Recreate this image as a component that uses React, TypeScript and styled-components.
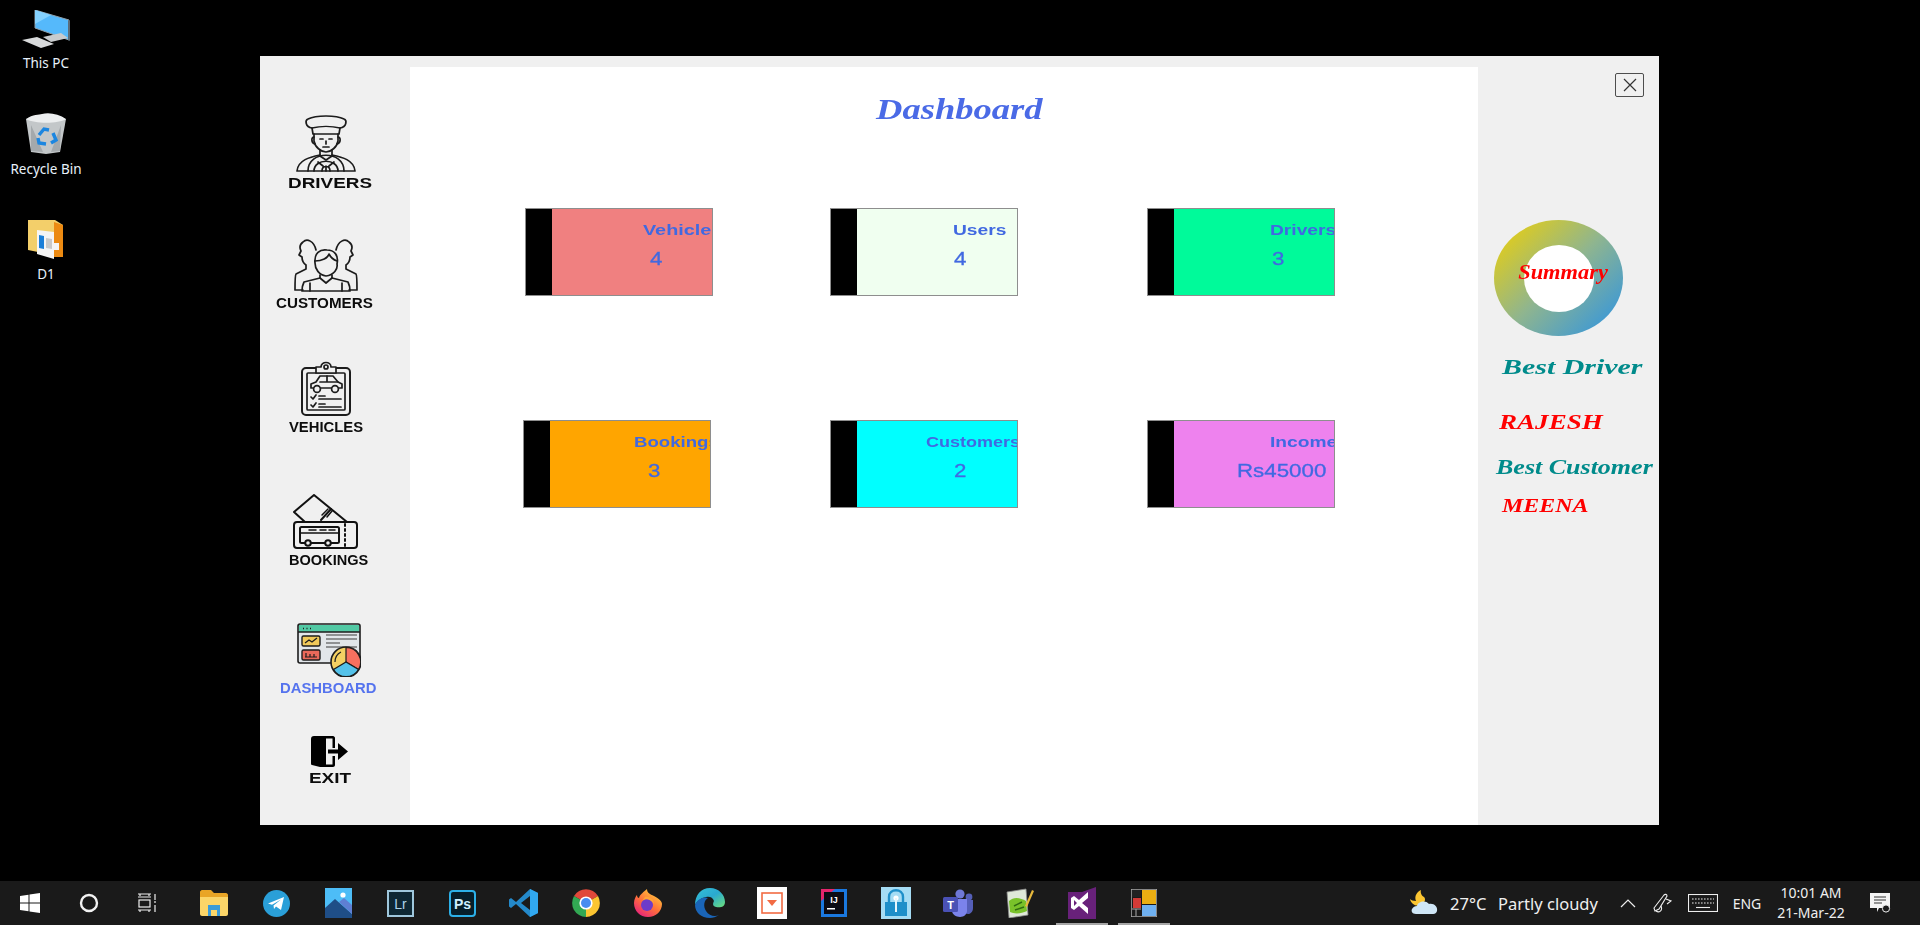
import React from "react";
import styled, { createGlobalStyle } from "styled-components";

const GlobalStyle = createGlobalStyle`
  html, body { margin: 0; padding: 0; background: #000; }
  body { width: 1920px; height: 925px; overflow: hidden; font-family: "Liberation Sans", Arial, sans-serif; }
`;

const Screen = styled.div`
  width: 1920px;
  height: 925px;
  display: flex;
  flex-direction: column;
  background: #000;
`;

const Desktop = styled.div`
  display: flex;
  height: 881px;
`;

const ShortcutColumn = styled.div`
  width: 92px;
  flex: none;
  display: flex;
  flex-direction: column;
  align-items: center;
`;

const Shortcut = styled.div<{ $top: number }>`
  margin-top: ${(p) => p.$top}px;
  display: flex;
  flex-direction: column;
  align-items: center;
  color: #e8f2fb;
  font-family: "Noto Sans", sans-serif;
  font-size: 13.5px;
  line-height: 18px;
  gap: 6px;
  svg { display: block; }
`;

const AppWindow = styled.div`
  margin: 56px 0 0 168px;
  width: 1399px;
  height: 769px;
  display: flex;
  background: #f0f0f0;
  filter: blur(0.3px);
`;

const Sidebar = styled.nav`
  width: 150px;
  flex: none;
  display: flex;
  flex-direction: column;
  padding-top: 59px;
  box-sizing: border-box;
`;

const NavItem = styled.div<{ $top: number }>`
  margin-top: ${(p) => p.$top}px;
  display: flex;
  flex-direction: column;
  align-items: flex-start;
`;

const NavIcon = styled.div<{ $left: number }>`
  margin-left: ${(p) => p.$left}px;
  svg { display: block; }
`;

const NavLabel = styled.span<{ $left: number; $size: number; $sx: number; $active?: boolean }>`
  margin: 3px 0 0 ${(p) => p.$left}px;
  height: 16px;
  line-height: 16px;
  font-size: ${(p) => p.$size}px;
  font-weight: 700;
  white-space: nowrap;
  color: ${(p) => (p.$active ? "#5573ee" : "#0c0c0c")};
  transform: scaleX(${(p) => p.$sx});
  transform-origin: left center;
`;

const Main = styled.main`
  width: 1068px;
  flex: none;
  margin-top: 11px;
  background: #fff;
`;

const Title = styled.h1`
  margin: 0;
  padding: 25px 0 0 466px;
  line-height: 34px;
  height: 34px;
  font-family: "Liberation Serif", serif;
  font-style: italic;
  font-weight: 700;
  font-size: 29px;
  color: #4a6ae6;
  white-space: nowrap;
  transform: scaleX(1.26);
  transform-origin: 466px center;
`;

const Grid = styled.div`
  margin-top: 82px;
  display: flex;
  flex-direction: column;
  gap: 124px;
`;

const CardRow = styled.div`
  display: flex;
`;

const Card = styled.div<{ $left: number; $bg: string }>`
  margin-left: ${(p) => p.$left}px;
  width: 188px;
  height: 88px;
  box-sizing: border-box;
  flex: none;
  display: flex;
  border: 1px solid #8e8e8e;
  background: ${(p) => p.$bg};
  overflow: hidden;
`;

const CardBar = styled.div`
  width: 26px;
  flex: none;
  background: #000;
`;

const CardBody = styled.div`
  flex: 1;
  min-width: 0;
  display: flex;
  flex-direction: column;
  align-items: flex-start;
  padding-top: 12px;
  color: #4169e1;
  font-weight: 700;
  white-space: nowrap;
`;

const CardLabel = styled.div<{ $left: number; $sx: number }>`
  margin-left: ${(p) => p.$left}px;
  font-size: 15px;
  line-height: 18px;
  transform: scaleX(${(p) => p.$sx});
  transform-origin: left center;
`;

const CardValue = styled.div<{ $left: number }>`
  margin: 9px 0 0 ${(p) => p.$left}px;
  font-size: 18px;
  line-height: 22px;
  font-weight: 400;
  transform: scaleX(1.24);
  transform-origin: left center;
  -webkit-text-stroke: 0.3px #4169e1;
`;

const Summary = styled.aside`
  flex: 1;
  display: flex;
  flex-direction: column;
  align-items: flex-start;
`;

const CloseButton = styled.button`
  align-self: flex-end;
  margin: 17px 15px 0 0;
  width: 29px;
  height: 24px;
  padding: 0;
  display: flex;
  align-items: center;
  justify-content: center;
  background: transparent;
  border: 1.5px solid #4d4d4d;
  border-radius: 2px;
`;

const Donut = styled.div`
  margin: 123px 0 0 16px;
  width: 129px;
  height: 116px;
  border-radius: 50%;
  display: flex;
  align-items: center;
  justify-content: center;
  background: linear-gradient(135deg, #dccb22 12%, #8fb58f 50%, #419ad2 88%);
`;

const DonutHole = styled.div`
  width: 70px;
  height: 67px;
  border-radius: 50%;
  background: #fff;
  display: flex;
  align-items: center;
  justify-content: center;
`;

const ScriptText = styled.div<{ $size: number; $sx: number; $color: string; $top: number; $left: number }>`
  margin: ${(p) => p.$top}px 0 0 ${(p) => p.$left}px;
  height: 24px;
  line-height: 24px;
  font-family: "Liberation Serif", serif;
  font-style: italic;
  font-weight: 700;
  font-size: ${(p) => p.$size}px;
  color: ${(p) => p.$color};
  white-space: nowrap;
  transform: scaleX(${(p) => p.$sx});
  transform-origin: left center;
`;

const DonutText = styled.span`
  margin: 0 0 12px 9px;
  flex: none;
  font-family: "Liberation Serif", serif;
  font-style: italic;
  font-weight: 700;
  font-size: 20px;
  color: #ff0000;
  transform: scaleX(1.12);
  white-space: nowrap;
`;

const Taskbar = styled.footer`
  height: 44px;
  display: flex;
  align-items: stretch;
  background: #1a1a1a;
`;

const SystemButton = styled.div`
  width: 59px;
  flex: none;
  display: flex;
  align-items: center;
  justify-content: center;
`;

const TaskList = styled.div`
  display: flex;
  margin-left: 6px;
`;

const TaskItem = styled.div<{ $open?: boolean }>`
  width: 52px;
  margin: 0 5px;
  flex: none;
  box-sizing: border-box;
  display: flex;
  align-items: center;
  justify-content: center;
  border-top: 2px solid transparent;
  border-bottom: 2px solid ${(p) => (p.$open ? "#a6a6a6" : "transparent")};
`;

const Tray = styled.div`
  margin-left: auto;
  display: grid;
  grid-template-columns: 40px 48px 114px 32px 38px 42px 46px 82px 56px;
  width: 510px;
  color: #efefef;
  font-family: "Noto Sans", sans-serif;
`;

const TraySlot = styled.div<{ $start?: boolean; $size?: number }>`
  display: flex;
  align-items: center;
  justify-content: ${(p) => (p.$start ? "flex-start" : "center")};
  font-size: ${(p) => p.$size ?? 16.5}px;
  white-space: nowrap;
`;

const Clock = styled.div`
  text-align: center;
  font-size: 14px;
  line-height: 20px;
`;

const stroke = { fill: "none", stroke: "#1c1c1c", strokeWidth: 1.7, strokeLinecap: "round", strokeLinejoin: "round" } as const;

const DriverIcon = () => (
  <svg width="60" height="57" viewBox="0 0 60 57">
    <g {...stroke}>
      <path d="M16 13C9 12 9 5 12 4C20 0 40 0 48 4C51 5 51 12 44 13C36 11 24 11 16 13Z" />
      <path d="M16 13L17 19L43 19L44 13" />
      <path d="M18 19V26C19 32 25 37 30 37C35 37 41 32 42 26V19" />
      <path d="M18 22C15 22 15 28 19 29M42 22C45 22 45 28 41 29" />
      <path d="M24 24H27M33 24H36M30 26V29M27 32H33" />
      <path d="M24 35V41L30 45L36 41V35" />
      <path d="M24 40C14 42 2 45 1 56H59C58 45 46 42 36 40" />
      <path d="M12 56C12 35 48 35 48 56" />
      <path d="M18 56C18 43 42 43 42 56" />
      <path d="M22 47L27 51M38 47L33 51M30 51V56M26 56C26 50 34 50 34 56" />
    </g>
  </svg>
);

const CustomersIcon = () => (
  <svg width="64" height="54" viewBox="0 0 64 54">
    <g {...stroke}>
      <path d="M22 12C20 3 13 0 9 4C5 7 6 11 7 13L5 17L8 19C8 23 9 25 12 27V31L2 36C1 37 1 40 1 52H9" />
      <path d="M42 12C44 3 51 0 55 4C59 7 58 11 57 13L59 17L56 19C56 23 55 25 52 27V31L62 36C63 37 63 40 63 52H55" />
      <path d="M21 25C20 15 26 11 33 12C40 12 45 17 43 26C44 31 40 37 32 38C25 37 21 31 21 25Z" />
      <path d="M21 23C28 23 34 20 35 16C37 20 40 22 43 23" />
      <path d="M26 37V40L10 44C9 46 8 48 8 53H56C56 48 55 46 54 44L38 40V37" />
      <path d="M26 40L32 45L38 40M16 45V53M48 45V53" />
    </g>
  </svg>
);

const VehiclesIcon = () => (
  <svg width="50" height="55" viewBox="0 0 50 55">
    <g {...stroke}>
      <rect x="1" y="7" width="48" height="47" rx="4" strokeWidth="2" />
      <rect x="6" y="12" width="38" height="37" rx="1" />
      <path d="M15 12V6H20C20 0 30 0 30 6H35V12Z" fill="#f0f0f0" />
      <circle cx="25" cy="6" r="2" />
      <path d="M10 27V23L15 21L19 15H32L37 21L41 23V27Z" />
      <circle cx="16" cy="28" r="3.4" fill="#f0f0f0" />
      <circle cx="34" cy="28" r="3.4" fill="#f0f0f0" />
      <path d="M19 21H37M26 15V21" />
      <path d="M10 36L12 38L15 34M10 44L12 46L15 42M18 35H24M18 38H40M18 43H24M18 46H40" />
    </g>
  </svg>
);

const BookingsIcon = () => (
  <svg width="65" height="55" viewBox="0 0 65 55">
    <g fill="none" stroke="#111" strokeWidth="2" strokeLinejoin="round" strokeLinecap="round">
      <path d="M12 28L1 18L21 1L54 28" />
      <path d="M28 26L38 15" />
      <path d="M28 22L34 16M33 24L38 18" strokeWidth="1.5" transform="translate(1 -1)" />
      <rect x="1" y="28" width="63" height="26" rx="3" />
      <rect x="7" y="33" width="39" height="16" rx="1.5" />
      <path d="M7 39H46M16 36H23M27 36H33M36 36H42" strokeWidth="1.5" />
      <circle cx="15" cy="49" r="2.8" fill="#f0f0f0" />
      <circle cx="35" cy="49" r="2.8" fill="#f0f0f0" />
      <path d="M52 30V53" strokeDasharray="2 3" />
    </g>
  </svg>
);

const DashboardIcon = () => (
  <svg width="64" height="54" viewBox="0 0 64 54">
    <rect x="1" y="1" width="62" height="39" rx="2" fill="#e2e6ea" stroke="#1d1d1d" strokeWidth="1.6" />
    <rect x="2" y="2" width="60" height="7" fill="#52c9a4" />
    <path d="M1 9H63" stroke="#1d1d1d" strokeWidth="1.4" />
    <path d="M6 5.5H7M9.5 5.5H10.5M13 5.5H14" stroke="#1d1d1d" strokeWidth="1.4" />
    <rect x="5" y="13" width="18" height="10" rx="1.5" fill="#f0c95a" stroke="#1d1d1d" strokeWidth="1.4" />
    <path d="M8 20L12 17L15 19L20 15" fill="none" stroke="#1d1d1d" strokeWidth="1.3" />
    <rect x="5" y="27" width="18" height="10" rx="1.5" fill="#e8695a" stroke="#1d1d1d" strokeWidth="1.4" />
    <path d="M8 34H20M9 34V30M13 34V31M17 34V31" fill="none" stroke="#1d1d1d" strokeWidth="1.2" />
    <path d="M29 12H60M29 16H60M29 20H43M29 24H60M47 28H60" stroke="#3c3c3c" strokeWidth="1.2" />
    <circle cx="49" cy="39" r="15" fill="#f4d163" stroke="#1d1d1d" strokeWidth="1.6" />
    <path d="M49 39V24.5A14.5 14.5 0 0 1 61.5 46.5Z" fill="#f7705f" stroke="#1d1d1d" strokeWidth="1.2" />
    <path d="M49 39L61.5 46.5A14.5 14.5 0 0 1 36.5 46.5Z" fill="#54c2ea" stroke="#1d1d1d" strokeWidth="1.2" />
    <path d="M38 39C38 34 40 31 44 29" fill="none" stroke="#1d1d1d" strokeWidth="1.2" />
  </svg>
);

const ExitIcon = () => (
  <svg width="37" height="31" viewBox="0 0 37 31">
    <path d="M3 0H22C23 0 24 1 24 2V12H21.5V2.5H15V28.5H21.5V20H24V29C24 30 23 31 22 31H9L1 29C0 29 0 28 0 27V3C0 1 1 0 3 0Z" fill="#000" />
    <path d="M17 13.5H27V7L37 15.5L27 24V17.5H17Z" fill="#000" />
  </svg>
);

const ThisPcIcon = () => (
  <svg width="50" height="38" viewBox="0 0 50 38">
    <path d="M14 0L48 10V30L14 18Z" fill="#55b9fb" stroke="#90a0ab" strokeWidth="1" />
    <path d="M14 0L30 5L14 14Z" fill="#84d2ff" />
    <path d="M47 10L49 11V31L47 30Z" fill="#5b6c78" />
    <path d="M22 27L40 23L47 28L30 32Z" fill="#c8cbcd" />
    <path d="M1 30L16 27L33 34L20 38Z" fill="#d8dadb" />
  </svg>
);

const RecycleIcon = () => (
  <svg width="42" height="41" viewBox="0 0 42 41">
    <path d="M1 6L41 6L35 39L21 41L6 39Z" fill="#c3c7c9" />
    <path d="M1 6C8 1 14 2 17 1C24 -1 34 1 41 6C33 11 10 11 1 6Z" fill="#eceeef" />
    <path d="M6 12L18 39L6 38ZM36 12L26 39L35 38Z" fill="#a4a9ac" />
    <path d="M14 22L19 16L24 17M28 20L31 27L26 30M21 31L14 30L13 25" fill="none" stroke="#1c86e0" strokeWidth="3.4" />
  </svg>
);

const FolderIcon = () => (
  <svg width="36" height="39" viewBox="0 0 36 39">
    <path d="M0 0H27L35 5V37L0 30Z" fill="#f3cf6a" />
    <path d="M26 2L35 5V37H26Z" fill="#ec8a12" />
    <path d="M9 10L26 12V39L9 34Z" fill="#f5f5f5" />
    <path d="M11 15L16 16V29L11 28Z" fill="#1b7fd8" />
    <path d="M18 18L24 19V29L18 28Z" fill="#c9c9c9" />
    <path d="M26 23H31V30H26Z" fill="#f5f5f5" />
  </svg>
);

const WinLogo = () => (
  <svg width="20" height="20" viewBox="0 0 20 20" fill="#fff">
    <path d="M0 3L8.5 1.8V9.5H0ZM9.5 1.6L20 0V9.5H9.5ZM0 10.5H8.5V18.2L0 17ZM9.5 10.5H20V20L9.5 18.4Z" />
  </svg>
);

const CortanaCircle = () => (
  <svg width="20" height="20" viewBox="0 0 20 20">
    <circle cx="10" cy="10" r="8" fill="none" stroke="#f2f2f2" strokeWidth="2.4" />
  </svg>
);

const TaskViewIcon = () => (
  <svg width="20" height="20" viewBox="0 0 20 20" fill="none" stroke="#eee" strokeWidth="1.2">
    <path d="M0 1H13M2 1V3M11 1V3M0 4H13" />
    <rect x="1" y="7" width="11" height="7" />
    <path d="M0 17H13M2 17V19M11 17V19M17 1V7M17 8V10M17 12V19" />
  </svg>
);

const ExplorerIcon = () => (
  <svg width="28" height="26" viewBox="0 0 28 26">
    <path d="M0 2C0 1 1 0 2 0H11L14 3H26C27 3 28 4 28 5V8H0Z" fill="#e9a526" />
    <path d="M0 7H28V24C28 25 27 26 26 26H2C1 26 0 25 0 24Z" fill="#fbd568" />
    <path d="M8 15H20V26H17V20H11V26H8Z" fill="#3a9bd8" />
  </svg>
);

const TelegramIcon = () => (
  <svg width="27" height="27" viewBox="0 0 27 27">
    <circle cx="13.5" cy="13.5" r="13.5" fill="#2a9fd8" />
    <path d="M5 13.5L21 7L18 20L13 16.5L11 19L10.5 15.5L18 9.5L9 14.8Z" fill="#fff" />
  </svg>
);

const PhotosIcon = () => (
  <svg width="27" height="30" viewBox="0 0 27 30">
    <rect width="27" height="30" fill="#4dbdf7" />
    <circle cx="18" cy="7" r="2.6" fill="#fff" />
    <path d="M0 20L10 11L27 26V30H0Z" fill="#1f4e87" />
    <path d="M14 14L19 10L27 17V26Z" fill="#5f7fd3" />
  </svg>
);

const BadgeIcon = styled.svg`
  font-family: "Liberation Sans", sans-serif;
`;

const LrIcon = () => (
  <BadgeIcon width="27" height="27" viewBox="0 0 27 27">
    <rect x="1" y="1" width="25" height="25" fill="#0e2733" stroke="#9fc7dc" strokeWidth="2" />
    <text x="13.5" y="19" textAnchor="middle" fontSize="14" fill="#add5ec">Lr</text>
  </BadgeIcon>
);

const PsIcon = () => (
  <BadgeIcon width="27" height="27" viewBox="0 0 27 27">
    <rect x="1" y="1" width="25" height="25" rx="3" fill="#061e2a" stroke="#2cb0e8" strokeWidth="2" />
    <text x="13.5" y="19" textAnchor="middle" fontSize="14" fontWeight="700" fill="#cfefff">Ps</text>
  </BadgeIcon>
);

const VsCodeIcon = () => (
  <svg width="30" height="30" viewBox="0 0 30 30">
    <path d="M21 1L29 5V25L21 29L7 16L2 20L0 18.5V11.5L2 10L7 14Z" fill="#2489ca" />
    <path d="M21 8L12 15L21 22Z" fill="#1a1a1a" />
    <path d="M21 1L29 5V25L21 29Z" fill="#31a8f0" />
  </svg>
);

const ChromeIcon = () => (
  <svg width="28" height="28" viewBox="0 0 28 28">
    <path d="M14 14L2 7A14 14 0 0 1 26 7Z" fill="#e0483a" />
    <path d="M14 14L2 7A14 14 0 0 0 14 28Z" fill="#32a853" />
    <path d="M14 14L26 7A14 14 0 0 1 14 28Z" fill="#fbc531" />
    <circle cx="14" cy="14" r="6.6" fill="#fff" />
    <circle cx="14" cy="14" r="5" fill="#4a8cf0" />
  </svg>
);

const FirefoxIcon = () => (
  <svg width="28" height="28" viewBox="0 0 28 28">
    <defs>
      <linearGradient id="ffGrad" x1="0.8" y1="0" x2="0.1" y2="1">
        <stop offset="0" stopColor="#ffd43b" />
        <stop offset="0.5" stopColor="#ff7139" />
        <stop offset="1" stopColor="#e31587" />
      </linearGradient>
    </defs>
    <path d="M14 28C6 28 0 22 0 14C0 10 2 7 3 6C3 8 4 9 5 9C6 5 10 3 13 0C13 4 16 5 20 7C25 10 28 12 28 15C28 22 22 28 14 28Z" fill="url(#ffGrad)" />
    <circle cx="13" cy="16" r="6" fill="#6c3bc9" />
    <path d="M8 12C11 9 17 10 20 15C20 10 15 7 11 8Z" fill="#ffa436" />
  </svg>
);

const EdgeIcon = () => (
  <svg width="30" height="30" viewBox="0 0 30 30">
    <defs>
      <linearGradient id="edgeGrad" x1="0" y1="0" x2="1" y2="1">
        <stop offset="0" stopColor="#35c1d8" />
        <stop offset="0.5" stopColor="#2aa9d0" />
        <stop offset="1" stopColor="#6ee07a" />
      </linearGradient>
    </defs>
    <path d="M15 0C24 0 30 7 30 14C30 19 25 20 21 19C17 18 18 15 19 13C18 9 14 8 11 9C6 10 2 13 0 17C0 7 6 0 15 0Z" fill="url(#edgeGrad)" />
    <path d="M0 17C2 11 9 8 13 10C9 12 8 18 11 23C14 28 20 29 24 27C21 29 18 30 15 30C6 30 0 24 0 17Z" fill="#1a65b8" />
  </svg>
);

const ScreenIcon = () => (
  <svg width="30" height="32" viewBox="0 0 30 32">
    <rect width="30" height="32" fill="#fff" />
    <rect x="5" y="6" width="20" height="20" fill="none" stroke="#f26b43" strokeWidth="1.6" />
    <path d="M10 13H20L15 19Z" fill="#f26b43" />
  </svg>
);

const IntellijIcon = () => (
  <BadgeIcon width="26" height="28" viewBox="0 0 26 28">
    <rect width="26" height="28" fill="#1a78e0" />
    <path d="M0 0H14L0 12Z" fill="#e5256c" />
    <rect x="3" y="3" width="20" height="22" fill="#0b0b14" />
    <text x="13" y="14" textAnchor="middle" fontSize="9" fontWeight="700" fill="#fff">IJ</text>
    <rect x="6" y="19" width="8" height="1.5" fill="#fff" />
  </BadgeIcon>
);

const LockIcon = () => (
  <svg width="30" height="32" viewBox="0 0 30 32">
    <rect width="30" height="32" fill="#a5dcf4" />
    <path d="M8 15V10C8 1 22 1 22 10V15" fill="none" stroke="#1f8fc9" strokeWidth="2.4" />
    <rect x="4" y="15" width="22" height="14" fill="#1f8fc9" />
    <circle cx="15" cy="11" r="2.6" fill="#fff" />
    <rect x="14" y="11" width="2" height="14" fill="#e8f6fc" />
  </svg>
);

const TeamsIcon = () => (
  <BadgeIcon width="30" height="28" viewBox="0 0 30 28">
    <circle cx="17" cy="5" r="4.6" fill="#6f78d6" />
    <circle cx="26" cy="8" r="3.4" fill="#555fb8" />
    <path d="M20 11H30V19C30 23 27 25 25 25L20 24Z" fill="#555fb8" />
    <path d="M9 10H24V22C24 25 21 28 17 28C13 28 9 25 9 22Z" fill="#7b83eb" />
    <rect y="8" width="15" height="15" rx="1.5" fill="#4a51b5" />
    <text x="7.5" y="20" textAnchor="middle" fontSize="11" fontWeight="700" fill="#fff">T</text>
  </BadgeIcon>
);

const NotepadIcon = () => (
  <svg width="28" height="30" viewBox="0 0 28 30">
    <path d="M1 4L20 1L22 27L3 30Z" fill="#dfe8d8" stroke="#8a8a8a" strokeWidth="0.8" />
    <path d="M3 13C8 8 15 10 20 13L21 23C15 26 8 26 4 24Z" fill="#79c22a" />
    <path d="M8 18L16 14M9 22L18 19" stroke="#2f6b12" strokeWidth="1.5" />
    <path d="M19 18L26 2L28 3L21 19Z" fill="#e8b93c" />
  </svg>
);

const VisualStudioIcon = () => (
  <svg width="28" height="32" viewBox="0 0 28 32">
    <path d="M0 5H14L28 0V32H0Z" fill="#68217a" />
    <path d="M20 5V27L11 19L6 23L3 21V11L6 9L11 13ZM20 11L14 16L20 21ZM6 13V19L9 16Z" fill="#fff" fillRule="evenodd" />
  </svg>
);

const PaletteIcon = () => (
  <svg width="26" height="28" viewBox="0 0 26 28">
    <rect width="26" height="28" fill="#1a1a1a" stroke="#aaa" strokeWidth="1.5" />
    <rect x="1" y="1" width="9" height="7" fill="#222" />
    <rect x="11" y="1" width="14" height="14" fill="#ebae12" />
    <rect x="2" y="9" width="8" height="10" fill="#d33a36" />
    <rect x="11" y="16" width="14" height="11" fill="#6fb0f0" />
    <path d="M1 20H10M5 20V27" stroke="#aaa" />
  </svg>
);

const WeatherIcon = () => (
  <svg width="28" height="26" viewBox="0 0 28 26">
    <path d="M11 0C7 2 4 6 6 11C3 11 1 10 0 9C1 14 6 17 11 15C15 13 16 9 14 7C12 6 10 3 11 0Z" fill="#fbc531" />
    <path d="M6 24C2 24 1 21 2 19C3 17 5 16 7 16C8 11 16 10 19 14C24 13 28 17 27 21C26 24 24 24 22 24Z" fill="#cfe6f6" />
  </svg>
);

const CaretIcon = () => (
  <svg width="16" height="9" viewBox="0 0 16 9" fill="none" stroke="#eee" strokeWidth="1.2">
    <path d="M1 8L8 1L15 8" />
  </svg>
);

const PenIcon = () => (
  <svg width="20" height="20" viewBox="0 0 20 20" fill="none" stroke="#eee" strokeWidth="1.1">
    <path d="M2 18L1 15L11 2C12 1 14 1 14 3L6 16Z" />
    <path d="M13 6L18 8L14 11M8 13C10 18 6 20 3 18" />
  </svg>
);

const KeyboardIcon = () => (
  <svg width="30" height="18" viewBox="0 0 30 18" fill="none" stroke="#eee" strokeWidth="1.1">
    <rect x="0.5" y="0.5" width="29" height="17" />
    <path d="M4 5H26M4 9H26" strokeDasharray="1.6 1.4" />
    <path d="M8 13.5H22" />
  </svg>
);

const NotificationIcon = () => (
  <svg width="21" height="20" viewBox="0 0 21 20">
    <path d="M0 0H20V15H9L7 19V15H0Z" fill="#f4f4f4" />
    <path d="M4 4H16M4 7H16M4 10H12" stroke="#333" strokeWidth="1.1" />
    <circle cx="16" cy="15.5" r="3.6" fill="#1a1a1a" stroke="#eee" strokeWidth="1" />
  </svg>
);

const navItems = [
  { top: 0, iconLeft: 36, labelLeft: 28, size: 15, sx: 1.26, label: "DRIVERS", Icon: DriverIcon },
  { top: 47, iconLeft: 34, labelLeft: 16, size: 14, sx: 1.085, label: "CUSTOMERS", Icon: CustomersIcon },
  { top: 50, iconLeft: 41, labelLeft: 29, size: 14, sx: 1.057, label: "VEHICLES", Icon: VehiclesIcon },
  { top: 59, iconLeft: 33, labelLeft: 29, size: 15, sx: 0.97, label: "BOOKINGS", Icon: BookingsIcon },
  { top: 55, iconLeft: 37, labelLeft: 20, size: 14, sx: 1.06, label: "DASHBOARD", Icon: DashboardIcon, active: true },
  { top: 40, iconLeft: 51, labelLeft: 49, size: 15, sx: 1.26, label: "EXIT", Icon: ExitIcon },
];

const cardRows = [
  [
    { left: 115, bg: "#f08080", label: "Vehicles", labelLeft: 91, sx: 1.32, value: "4", valueLeft: 98 },
    { left: 117, bg: "#f0fff0", label: "Users", labelLeft: 96, sx: 1.28, value: "4", valueLeft: 97 },
    { left: 129, bg: "#00fa9a", label: "Drivers", labelLeft: 96, sx: 1.28, value: "3", valueLeft: 98 },
  ],
  [
    { left: 113, bg: "#ffa500", label: "Bookings", labelLeft: 84, sx: 1.24, value: "3", valueLeft: 98 },
    { left: 119, bg: "#00ffff", label: "Customers", labelLeft: 69, sx: 1.2, value: "2", valueLeft: 97 },
    { left: 129, bg: "#ee82ee", label: "Income", labelLeft: 96, sx: 1.28, value: "Rs45000", valueLeft: 63 },
  ],
];

const apps = [
  { Icon: ExplorerIcon }, { Icon: TelegramIcon }, { Icon: PhotosIcon }, { Icon: LrIcon }, { Icon: PsIcon },
  { Icon: VsCodeIcon }, { Icon: ChromeIcon }, { Icon: FirefoxIcon }, { Icon: EdgeIcon }, { Icon: ScreenIcon },
  { Icon: IntellijIcon }, { Icon: LockIcon }, { Icon: TeamsIcon }, { Icon: NotepadIcon },
  { Icon: VisualStudioIcon, open: true }, { Icon: PaletteIcon, open: true },
];

const App = () => {
  return (
    <Screen>
      <GlobalStyle />
      <Desktop>
        <ShortcutColumn>
          <Shortcut $top={10}><ThisPcIcon />This PC</Shortcut>
          <Shortcut $top={41}><RecycleIcon />Recycle Bin</Shortcut>
          <Shortcut $top={42}><FolderIcon />D1</Shortcut>
        </ShortcutColumn>
        <AppWindow>
          <Sidebar>
            {navItems.map(({ top, iconLeft, labelLeft, size, sx, label, Icon, active }) => (
              <NavItem key={label} $top={top}>
                <NavIcon $left={iconLeft}><Icon /></NavIcon>
                <NavLabel $left={labelLeft} $size={size} $sx={sx} $active={active}>{label}</NavLabel>
              </NavItem>
            ))}
          </Sidebar>
          <Main>
            <Title>Dashboard</Title>
            <Grid>
              {cardRows.map((row, i) => (
                <CardRow key={i}>
                  {row.map((c) => (
                    <Card key={c.label} $left={c.left} $bg={c.bg}>
                      <CardBar />
                      <CardBody>
                        <CardLabel $left={c.labelLeft} $sx={c.sx}>{c.label}</CardLabel>
                        <CardValue $left={c.valueLeft}>{c.value}</CardValue>
                      </CardBody>
                    </Card>
                  ))}
                </CardRow>
              ))}
            </Grid>
          </Main>
          <Summary>
            <CloseButton aria-label="Close">
              <svg width="14" height="14" viewBox="0 0 14 14" stroke="#333" strokeWidth="1.2">
                <path d="M1 1L13 13M13 1L1 13" />
              </svg>
            </CloseButton>
            <Donut>
              <DonutHole>
                <DonutText>Summary</DonutText>
              </DonutHole>
            </Donut>
            <ScriptText $top={19} $left={24} $size={22} $sx={1.36} $color="#008b8b">Best Driver</ScriptText>
            <ScriptText $top={31} $left={21} $size={22} $sx={1.23} $color="#ff0000">RAJESH</ScriptText>
            <ScriptText $top={21} $left={18} $size={20} $sx={1.3} $color="#008b8b">Best Customer</ScriptText>
            <ScriptText $top={15} $left={24} $size={19} $sx={1.26} $color="#ff0000">MEENA</ScriptText>
          </Summary>
        </AppWindow>
      </Desktop>
      <Taskbar>
        <SystemButton><WinLogo /></SystemButton>
        <SystemButton><CortanaCircle /></SystemButton>
        <SystemButton><TaskViewIcon /></SystemButton>
        <TaskList>
          {apps.map(({ Icon, open }, i) => (
            <TaskItem key={i} $open={open}><Icon /></TaskItem>
          ))}
        </TaskList>
        <Tray>
          <TraySlot $start><WeatherIcon /></TraySlot>
          <TraySlot $start>27°C</TraySlot>
          <TraySlot $start>Partly cloudy</TraySlot>
          <TraySlot><CaretIcon /></TraySlot>
          <TraySlot><PenIcon /></TraySlot>
          <TraySlot><KeyboardIcon /></TraySlot>
          <TraySlot $size={14}>ENG</TraySlot>
          <TraySlot><Clock>10:01 AM<br />21-Mar-22</Clock></TraySlot>
          <TraySlot><NotificationIcon /></TraySlot>
        </Tray>
      </Taskbar>
    </Screen>
  );
};

export default App;
